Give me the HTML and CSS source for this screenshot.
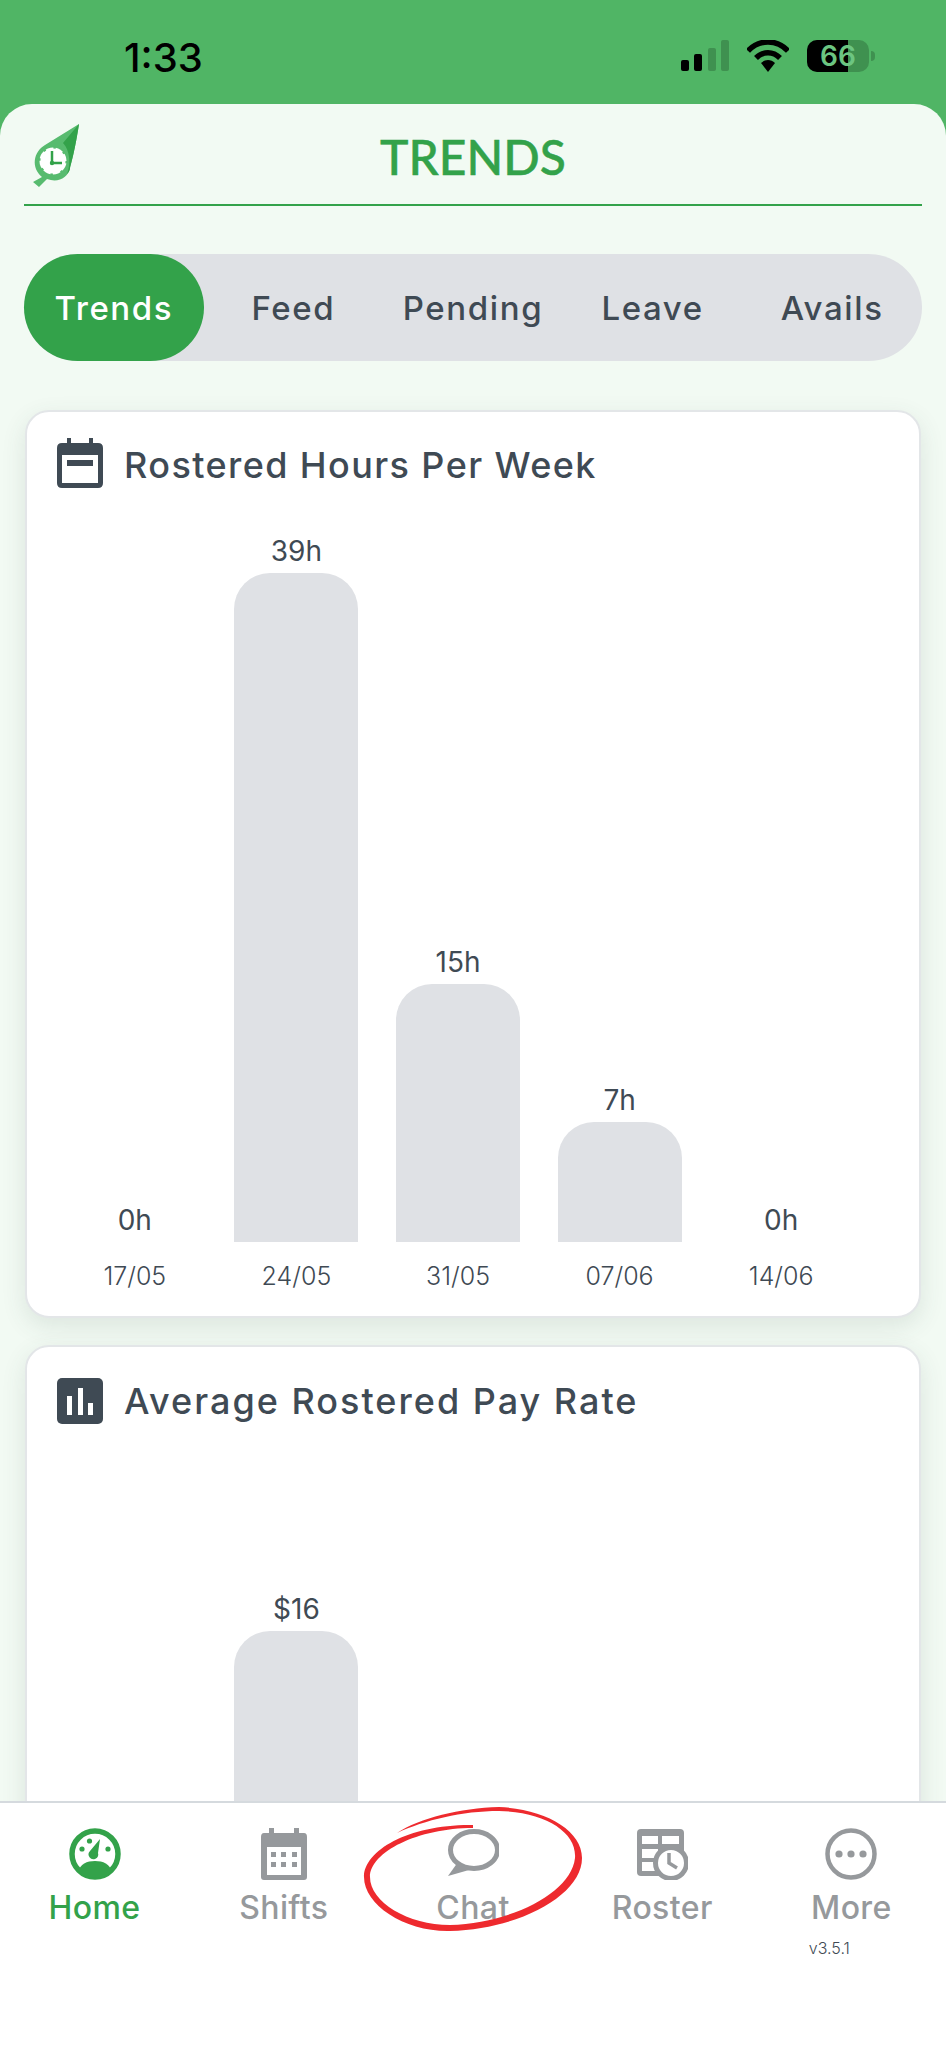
FILE: index.html
```html
<!DOCTYPE html>
<html lang="en">
<head>
  <meta charset="UTF-8" />
  <title>Trends</title>
  <link rel="stylesheet" href="styles.css">
</head>
<body>
  <div class="phone">
    <!-- status bar -->
    <div class="status">
      <span class="time">1:33</span>
      <div class="status-icons">
        <svg width="48" height="31" viewBox="0 0 48 31">
          <rect x="0" y="20" width="8" height="11" rx="2" fill="#000"/>
          <rect x="13" y="14" width="8" height="17" rx="2" fill="#000"/>
          <rect x="27" y="8" width="8" height="23" rx="2" fill="#3f9150"/>
          <rect x="40" y="0" width="8" height="31" rx="2" fill="#3f9150"/>
        </svg>
        <svg width="42" height="32" viewBox="0 0 42 32">
          <path d="M1 11 C12 -1 30 -1 41 11" fill="none" stroke="#000" stroke-width="5.5"/>
          <path d="M9 18 C16 11 26 11 33 18" fill="none" stroke="#000" stroke-width="5.5"/>
          <path d="M14 23 C18 19 24 19 28 23 L21 32 Z" fill="#000"/>
        </svg>
        <div class="battery">
          <div class="battery-body">
            <div class="battery-fill"></div>
            <span class="battery-num">66</span>
          </div>
          <div class="battery-tip"></div>
        </div>
      </div>
    </div>

    <div class="sheet">
      <div class="page-head">
        <svg class="logo" width="52" height="70" viewBox="30 120 52 70">
          <path d="M79 124 L45 145 C33 152 31 168 42 177 L33 182 L39 187 L47 179 C58 183 68 178 70 168 C72 160 75 150 79 124 Z" fill="#58bb6f"/>
          <path d="M79 124 L63 143 C70 150 71 165 67 174 C69 172 70 170 70 168 C72 160 75 150 79 124 Z" fill="#33a24a"/>
          <circle cx="53" cy="161" r="13.500" fill="#fff"/>
          <circle cx="53" cy="161" r="13.500" fill="none" stroke="#58bb6f" stroke-width="2" stroke-dasharray="2.500 8.100"/>
          <path d="M52 151 V163 H62" fill="none" stroke="#33a24a" stroke-width="2.500"/>
          <circle cx="52" cy="163" r="2.200" fill="#33a24a"/>
        </svg>
        <h1 class="page-title">TRENDS</h1>
      </div>

      <div class="tabs">
        <div class="tab tab-active">Trends</div>
        <div class="tab">Feed</div>
        <div class="tab">Pending</div>
        <div class="tab">Leave</div>
        <div class="tab">Avails</div>
      </div>

      <div class="card">
        <div class="card-title">
          <svg width="46" height="50" viewBox="0 0 46 50">
            <path d="M5 5 H10 V0 H14 V5 H32 V0 H36 V5 H41 Q46 5 46 10 V45 Q46 50 41 50 H5 Q0 50 0 45 V10 Q0 5 5 5 Z" fill="#3f4a54"/>
            <rect x="5" y="17" width="36" height="28" fill="#fff"/>
            <rect x="10" y="22" width="26" height="6" fill="#3f4a54"/>
          </svg>
          <span>Rostered Hours Per Week</span>
        </div>
        <div class="chart">
          <div class="col"><span class="val">0h</span><span class="date">17/05</span></div>
          <div class="col"><span class="val">39h</span><div class="bar" style="height: 669px"></div><span class="date">24/05</span></div>
          <div class="col"><span class="val">15h</span><div class="bar" style="height: 258px"></div><span class="date">31/05</span></div>
          <div class="col"><span class="val">7h</span><div class="bar" style="height: 120px"></div><span class="date">07/06</span></div>
          <div class="col"><span class="val">0h</span><span class="date">14/06</span></div>
        </div>
      </div>

      <div class="card">
        <div class="card-title card-title-second">
          <svg width="46" height="46" viewBox="0 0 46 46">
            <rect width="46" height="46" rx="5" fill="#3f4a54"/>
            <rect x="10" y="18" width="5" height="19" fill="#fff"/>
            <rect x="21" y="10" width="5" height="27" fill="#fff"/>
            <rect x="31" y="25" width="5" height="12" fill="#fff"/>
          </svg>
          <span>Average Rostered Pay Rate</span>
        </div>
        <div class="chart chart-pay">
          <div class="col"></div>
          <div class="col"><span class="val">$16</span><div class="bar" style="height: 545px"></div></div>
          <div class="col"></div>
          <div class="col"></div>
          <div class="col"></div>
        </div>
      </div>
    </div>

    <!-- bottom nav -->
    <div class="nav">
      <div class="nav-item nav-active">
        <svg width="52" height="52" viewBox="0 0 52 52">
          <circle cx="26" cy="26" r="23" fill="#fff" stroke="#33a24a" stroke-width="5.5"/>
          <path d="M9 44 C11 36 18 33 26 33 C34 33 41 36 43 44 C36 51 16 51 9 44 Z" fill="#33a24a"/>
          <path d="M31 11 L29 25 A4.8 4.8 0 1 1 21 23 Z" fill="#33a24a"/>
          <circle cx="13" cy="21" r="2.6" fill="#33a24a"/>
          <circle cx="20.500" cy="13" r="2.600" fill="#33a24a"/>
          <circle cx="39" cy="21" r="2.6" fill="#33a24a"/>
        </svg>
        <span>Home</span>
      </div>
      <div class="nav-item">
        <svg width="52" height="52" viewBox="0 0 48 52">
          <path d="M4 5 H9 V0 H14 V5 H34 V0 H39 V5 H44 Q47 5 47 9 V49 Q47 52 44 52 H4 Q1 52 1 49 V9 Q1 5 4 5 Z" fill="#96999c"/>
          <rect x="7" y="19" width="34" height="28" fill="#fff"/>
          <rect x="11" y="24" width="5" height="5" fill="#96999c"/><rect x="21" y="24" width="5" height="5" fill="#96999c"/><rect x="32" y="24" width="5" height="5" fill="#96999c"/>
          <rect x="11" y="34" width="5" height="5" fill="#96999c"/><rect x="21" y="34" width="5" height="5" fill="#96999c"/><rect x="32" y="34" width="5" height="5" fill="#96999c"/>
        </svg>
        <span>Shifts</span>
      </div>
      <div class="nav-item">
        <svg width="52" height="52" viewBox="0 0 52 52">
          <ellipse cx="27" cy="22" rx="23.500" ry="18.500" fill="none" stroke="#96999c" stroke-width="5"/>
          <path d="M11 34 L1 48 L22 42 Z" fill="#96999c"/>
        </svg>
        <span>Chat</span>
      </div>
      <div class="nav-item">
        <svg width="52" height="52" viewBox="0 0 52 52">
          <rect x="1" y="1" width="47" height="47" rx="4" fill="#96999c"/>
          <rect x="6" y="8" width="16" height="8" fill="#fff"/><rect x="26" y="8" width="17" height="8" fill="#fff"/>
          <rect x="6" y="21" width="16" height="9" fill="#fff"/><rect x="6" y="34" width="16" height="9" fill="#fff"/>
          <circle cx="35" cy="35" r="15.500" fill="#fff" stroke="#96999c" stroke-width="5"/>
          <path d="M33 25 V35 L41 40" fill="none" stroke="#96999c" stroke-width="3.500"/>
        </svg>
        <span>Roster</span>
      </div>
      <div class="nav-item">
        <svg width="52" height="52" viewBox="0 0 52 52">
          <circle cx="26" cy="26" r="23.500" fill="none" stroke="#96999c" stroke-width="4.500"/>
          <circle cx="14" cy="26" r="3.600" fill="#96999c"/><circle cx="26" cy="26" r="3.600" fill="#96999c"/><circle cx="38" cy="26" r="3.600" fill="#96999c"/>
        </svg>
        <span>More</span>
        <small class="version">v3.5.1</small>
      </div>
    </div>

    <!-- hand drawn circle over Chat -->
    <svg class="scribble" width="230" height="135" viewBox="360 1800 230 135">
      <path d="M397 1833 C420 1818 460 1808 499 1807 C545 1809 582 1830 582 1858 C582 1895 520 1929 450 1931 C405 1932 364 1905 364 1877 C364 1850 410 1824 473 1825 L473 1828 C418 1828 370 1852 370 1877 C370 1902 408 1925 450 1925 C512 1923 571 1893 575 1858 C577 1832 545 1812 499 1811 C462 1811 425 1820 397 1833 Z" fill="#ee2a2e"/>
    </svg>
  </div>
</body>
</html>
```

FILE: styles.css
```css
* {
  box-sizing: border-box;
}
body {
  margin: 0;
  font-family: Inter, "Liberation Sans", sans-serif;
  color: #3f4a54;
}
.phone {
  position: relative;
  display: flex;
  flex-direction: column;
  width: 946px;
  height: 2048px;
  overflow: hidden;
  background: #50b565;
}

/* status bar */
.status {
  display: flex;
  justify-content: space-between;
  align-items: center;
  height: 104px;
  padding: 7px 71px 0 124px;
  flex-shrink: 0;
}
.time {
  margin-top: 3px;
  font-size: 40px;
  font-weight: 500;
  color: #000;
}
.status-icons {
  display: flex;
  align-items: center;
  gap: 18px;
}
.battery {
  display: flex;
  align-items: center;
  gap: 2px;
}
.battery-body {
  position: relative;
  width: 62px;
  height: 32px;
  border-radius: 10px;
  overflow: hidden;
  background: #3f9150;
}
.battery-fill {
  width: 41px;
  height: 32px;
  background: #000;
}
.battery-num {
  position: absolute;
  inset: 0;
  text-align: center;
  line-height: 32px;
  font-size: 28px;
  font-weight: 600;
  color: #6cc581;
}
.battery-tip {
  width: 4px;
  height: 10px;
  border-radius: 0 4px 4px 0;
  background: #3f9150;
}

/* main sheet */
.sheet {
  flex: 1;
  min-height: 0;
  overflow: hidden;
  padding: 0 24px;
  background: #f2faf3;
  border-radius: 32px 32px 0 0;
}
.page-head {
  position: relative;
  display: flex;
  justify-content: center;
  align-items: center;
  height: 102px;
  padding-top: 4px;
  border-bottom: 2px solid #33a24a;
}
.logo {
  position: absolute;
  left: 6px;
  top: 16px;
}
.page-title {
  margin: 0;
  font-family: Lato, sans-serif;
  font-size: 48px;
  font-weight: 500;
  -webkit-text-stroke: 0.5px #33a24a;
  color: #33a24a;
}
.tabs {
  display: grid;
  grid-template-columns: repeat(5, 1fr);
  height: 107px;
  margin-top: 48px;
  background: #dfe1e5;
  border-radius: 54px;
}
.tab {
  display: flex;
  align-items: center;
  justify-content: center;
  font-size: 33px;
  font-weight: 500;
  letter-spacing: 1.6px;
}
.tab-active {
  background: #33a24a;
  color: #fff;
  border-radius: 54px;
}

/* cards */
.card {
  margin: 49px 1px 0;
  height: 908px;
  padding: 0 57px 0 27px;
  background: #fff;
  border: 2px solid #e3e6e8;
  border-radius: 24px;
  box-shadow: 0 8px 24px rgba(60, 80, 70, 0.12);
}
.card + .card {
  margin-top: 27px;
}
.card-title {
  display: flex;
  align-items: center;
  gap: 21px;
  height: 50px;
  margin-top: 26px;
  margin-left: 3px;
  font-size: 36px;
  font-weight: 500;
  letter-spacing: 1.4px;
}
.card-title span {
  padding-top: 3px;
}
.card-title-second {
  margin-top: 29px;
  letter-spacing: 2px;
}
.card-title-second span {
  padding-top: 0;
}
.chart {
  display: grid;
  grid-template-columns: repeat(5, 1fr);
  height: 816px;
}
.chart-pay {
  height: 750px;
}
.col {
  display: flex;
  flex-direction: column;
  justify-content: flex-end;
  align-items: center;
}
.val {
  height: 40px;
  line-height: 40px;
  margin-bottom: 2px;
  font-size: 28px;
  font-weight: 400;
}
.bar {
  width: 124px;
  background: #dfe1e5;
  border-radius: 36px 36px 0 0;
}
.date {
  height: 62px;
  padding-top: 16px;
  line-height: 36px;
  font-size: 25px;
  font-weight: 300;
}

/* bottom nav */
.nav {
  display: grid;
  grid-template-columns: repeat(5, 1fr);
  height: 247px;
  flex-shrink: 0;
  padding-top: 25px;
  background: #fff;
  border-top: 2px solid #d5dade;
}
.nav-item {
  position: relative;
  display: flex;
  flex-direction: column;
  align-items: center;
  gap: 8px;
  font-size: 32px;
  font-weight: 500;
  letter-spacing: 0.4px;
  color: #96999c;
}
.nav-active {
  color: #33a24a;
}
.version {
  position: absolute;
  top: 110px;
  left: 52px;
  font-size: 16px;
  font-weight: 300;
  letter-spacing: 0;
  color: #3f4a54;
}
.scribble {
  position: absolute;
  left: 360px;
  top: 1800px;
}
```
